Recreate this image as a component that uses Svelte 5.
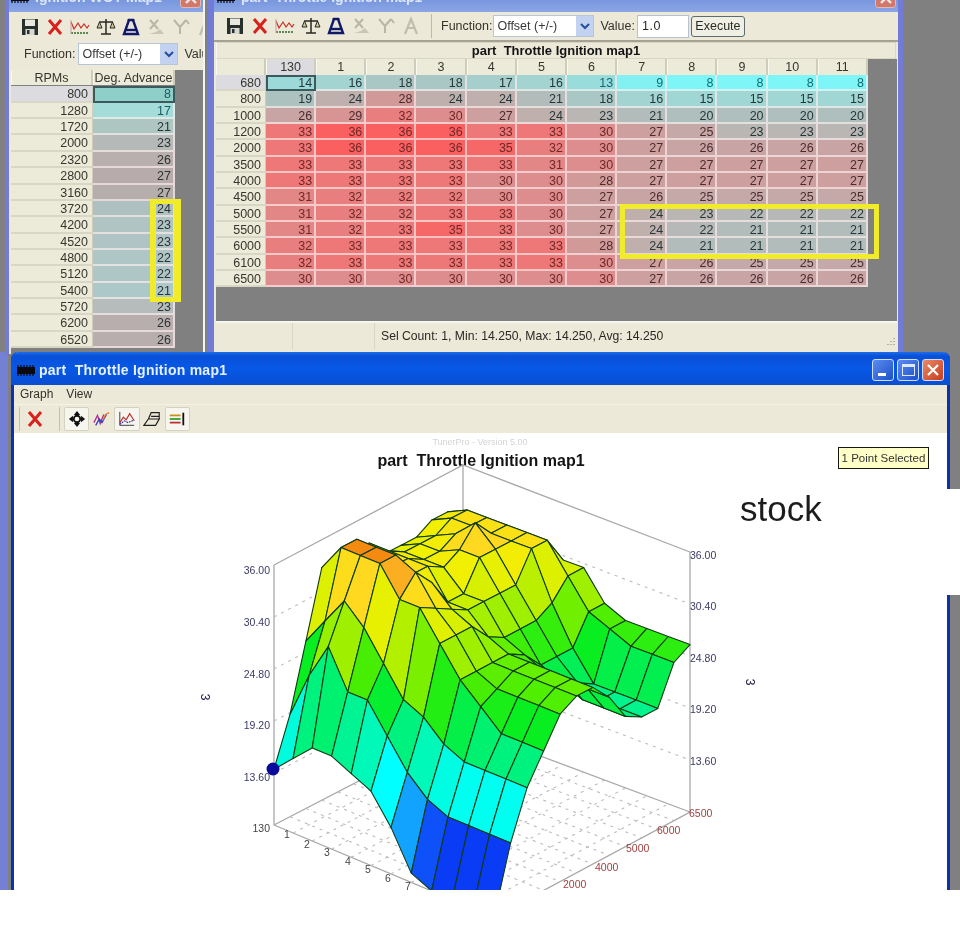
<script>
  const cols = ['130','1','2','3','4','5','6','7','8','9','10','11'];
  const rows = [
    [680,[14,16,18,18,17,16,13,9,8,8,8,8]],
    [800,[19,24,28,24,24,21,18,16,15,15,15,15]],
    [1000,[26,29,32,30,27,24,23,21,20,20,20,20]],
    [1200,[33,36,36,36,33,33,30,27,25,23,23,23]],
    [2000,[33,36,36,36,35,32,30,27,26,26,26,26]],
    [3500,[33,33,33,33,33,31,30,27,27,27,27,27]],
    [4000,[33,33,33,33,30,30,28,27,27,27,27,27]],
    [4500,[31,32,32,32,30,30,27,26,25,25,25,25]],
    [5000,[31,32,32,33,33,30,27,24,23,22,22,22]],
    [5500,[31,32,33,35,33,30,27,24,22,21,21,21]],
    [6000,[32,33,33,33,33,33,28,24,21,21,21,21]],
    [6100,[32,33,33,33,33,33,30,27,26,25,25,25]],
    [6500,[30,30,30,30,30,30,30,27,26,26,26,26]]
  ];
  const wot = [
    [800,8,'#8fcfca'],[1280,17,'#a4dcda'],[1720,21,'#aec6c2'],[2000,23,'#b5b9b7'],
    [2320,26,'#b9afae'],[2800,27,'#b7acab'],[3160,27,'#b5aead'],[3720,24,'#aec0bf'],
    [4200,23,'#b0c4c4'],[4520,23,'#b0c4c5'],[4800,22,'#aec6c6'],[5120,22,'#aec6c6'],
    [5400,21,'#acc8c8'],[5720,23,'#b6bcbc'],[6200,26,'#b9aeae'],[6520,26,'#b9aeae']
  ];

  function hex(c){ return [1,3,5].map(i=>parseInt(c.slice(i,i+2),16)); }
  function ramp(stops,v){
    if(v<=stops[0][0]) return stops[0][1];
    for(let i=1;i<stops.length;i++){
      if(v<=stops[i][0]){
        const t=(v-stops[i-1][0])/(stops[i][0]-stops[i-1][0]);
        const a=hex(stops[i-1][1]),b=hex(stops[i][1]);
        return `rgb(${a.map((x,k)=>Math.round(x+(b[k]-x)*t)).join(',')})`;
      }
    }
    return stops[stops.length-1][1];
  }
  const cellStops=[[8,'#7ef6f8'],[13,'#98dcdc'],[16,'#a4d4d2'],[19,'#abc2bf'],[21,'#b2bcba'],[23,'#b9b6b4'],[25,'#c4a9a8'],[27,'#cd9f9f'],[30,'#dd8d8d'],[33,'#ee7777'],[36,'#fa6060']];
  const surfStops=[[11.5,'#0a3cf5'],[13.5,'#1890ff'],[15.5,'#00d8ff'],[17,'#00ffff'],[19.5,'#00f8b8'],[22,'#00f070'],[24.5,'#08ee20'],[26.5,'#50ee00'],[28,'#90f000'],[30,'#c8f000'],[32,'#f0f000'],[33.5,'#ffd820'],[35.5,'#f8a020'],[36,'#f58a10']];
  const cellColor=v=>ramp(cellStops,v);
  const textColor=v=>v>=30?'#702828':v>=25?'#4a2c2c':v<=13?'#126a70':'#26383a';

  /* floor homography: u = column 0..1, v = row 0..1 */
  const L=[274,825],F=[494,917],R=[690,812],B=[463,727];
  const dx1=F[0]-R[0],dx2=B[0]-R[0],sx=L[0]-F[0]+R[0]-B[0];
  const dy1=F[1]-R[1],dy2=B[1]-R[1],sy=L[1]-F[1]+R[1]-B[1];
  const den=dx1*dy2-dx2*dy1;
  const g=(sx*dy2-dx2*sy)/den,h=(dx1*sy-sx*dy1)/den;
  const a=F[0]-L[0]+g*F[0],b=B[0]-L[0]+h*B[0],d=F[1]-L[1]+g*F[1],e=B[1]-L[1]+h*B[1];
  function floor(u,v){const w=g*u+h*v+1;return [(a*u+b*v+L[0])/w,(d*u+e*v+L[1])/w];}
  const ZS=9.3;
  function pt(c,r){const p=floor(c/11,r/12);return [p[0],p[1]-(rows[r][1][c]-8)*ZS];}
  const fmt=p=>p[0].toFixed(1)+','+p[1].toFixed(1);
  const quads=[];
  for(let r=11;r>=0;r--){
    for(let c=0;c<11;c++){
      const vals=[rows[r][1][c],rows[r][1][c+1],rows[r+1][1][c+1],rows[r+1][1][c]];
      const avg=vals.reduce((s,x)=>s+x,0)/4;
      quads.push({pts:[pt(c,r),pt(c+1,r),pt(c+1,r+1),pt(c,r+1)].map(fmt).join(' '),fill:ramp(surfStops,avg)});
    }
  }
  const floorLines=[];
  for(let c=1;c<11;c++){floorLines.push([floor(c/11,0),floor(c/11,1)]);}
  for(let r=1;r<12;r++){floorLines.push([floor(0,r/12),floor(1,r/12)]);}
  const zLeft=[[36,570],[30.4,622],[24.8,674],[19.2,725],[13.6,777]];
  const zRight=[[36,555],[30.4,606],[24.8,658],[19.2,709],[13.6,761]];
  const zFmt=['36.00','30.40','24.80','19.20','13.60'];
  const colTicks=[[287,838],[307,848],[327,856],[348,865],[368,873],[388,882],[408,890]];
  const rpmTicks=[['6500',689,817],['6000',657,834],['5000',626,852],['4000',595,871],['2000',563,888]];
  const tools=['save','x','chart','scale','weight','d1','d2','d3'];
</script>

<svg class="defs" aria-hidden="true">
  <defs>
    <symbol id="i-save" viewBox="0 0 20 20"><rect x="2" y="2" width="16" height="16" fill="#26302c"/><rect x="5" y="2.5" width="10" height="6.5" fill="#e8e8de"/><rect x="5.5" y="12" width="9" height="6" fill="#d8d8d0"/><rect x="7" y="13" width="2.5" height="4" fill="#26302c"/></symbol>
    <symbol id="i-x" viewBox="0 0 20 20"><path d="M4 3 16 17M16 3 4 17" stroke="#d8201c" stroke-width="3" fill="none"/></symbol>
    <symbol id="i-chart" viewBox="0 0 20 20"><path d="M1 16h18" stroke="#2a6a2a" stroke-width="1.3" stroke-dasharray="2 1" fill="none"/><path d="M1 5l3 7 4-6 3 5 3-4 3 4 2-3" stroke="#c83028" stroke-width="1.2" fill="none"/><path d="M1 3v14" stroke="#c8a0a0" stroke-width="1"/></symbol>
    <symbol id="i-scale" viewBox="0 0 20 20"><path d="M10 2v15M5 17h10M3 5h14" stroke="#2a2a20" stroke-width="1.5" fill="none"/><path d="M3.5 5 1 11h5zM16.5 5 14 11h5z" fill="#c8c49c" stroke="#2a2a20" stroke-width="1"/></symbol>
    <symbol id="i-weight" viewBox="0 0 20 20"><path d="M3 17h14L12 3H8z" fill="#e8e6d8" stroke="#101868" stroke-width="2.4"/><path d="M4 13h12" stroke="#101868" stroke-width="2.4"/><path d="M6.5 3h7" stroke="#101868" stroke-width="1.6"/></symbol>
    <symbol id="i-d1" viewBox="0 0 20 20"><path d="M4 3l8 9M12 3l-8 9" stroke="#b8b6a4" stroke-width="2" fill="none"/><path d="M3 17h15l-4-5-4 3z" fill="#c8c6b4"/></symbol>
    <symbol id="i-d2" viewBox="0 0 20 20"><path d="M3 3l6 7v7M15 3l-6 7M15 3l-3 4M15 3l3 4" stroke="#b8b6a4" stroke-width="2" fill="none"/></symbol>
    <symbol id="i-d3" viewBox="0 0 20 20"><path d="M4 18 10 3l6 15M6.5 12h7" stroke="#c0beac" stroke-width="2.2" fill="none"/></symbol>
    <symbol id="i-move" viewBox="0 0 20 20"><path d="M10 1l3.5 4.5h-7zM10 19l3.5-4.5h-7zM1 10l4.5-3.5v7zM19 10l-4.5-3.5v7z" fill="#101010"/><circle cx="10" cy="10" r="3.6" fill="none" stroke="#101010" stroke-width="2"/></symbol>
    <symbol id="i-zig" viewBox="0 0 20 20"><path d="M1 14 5 6l3 9 4-10" stroke="#b03090" stroke-width="1.5" fill="none"/><path d="M3 17l4-7 3 4 5-9" stroke="#3040c0" stroke-width="1.5" fill="none"/><path d="M11 11l3-6 4-2" stroke="#e08020" stroke-width="1.5" fill="none"/></symbol>
    <symbol id="i-graph" viewBox="0 0 20 20"><path d="M2 2v15h16" stroke="#303030" stroke-width="1" fill="none"/><path d="M2 14l4-6 3 3 4-7 5 8" stroke="#c03030" stroke-width="1.3" fill="none"/><path d="M2 16l5-4 4 2 7-3" stroke="#3030a0" stroke-width="1.2" stroke-dasharray="2 1" fill="none"/></symbol>
    <symbol id="i-plan" viewBox="0 0 20 20"><path d="M1 17 6 10h12l-4 7zM6 10 9 3h9v7M9 7h9" stroke="#202020" stroke-width="1.3" fill="none"/></symbol>
    <symbol id="i-legend" viewBox="0 0 20 20"><path d="M2 6h12" stroke="#c89020" stroke-width="2"/><path d="M2 10h12" stroke="#30a030" stroke-width="2"/><path d="M2 14h12" stroke="#c03030" stroke-width="2"/><path d="M17 3v14" stroke="#101010" stroke-width="2"/></symbol>
  </defs>
</svg>

{#snippet toolbarIcons()}
  {#each tools as t}
    <span class="tool"><svg width="20" height="20"><use href="#i-{t}"/></svg></span>
  {/each}
{/snippet}

{#snippet chip(cls)}
  <svg class={cls} width="18" height="11" viewBox="0 0 18 11"><rect y="2" width="18" height="7" fill="#0a0a10"/><path d="M1 0v11M4 0v11M7 0v11M10 0v11M13 0v11M16 0v11" stroke="#0a0a10" stroke-width="1.2" stroke-dasharray="2 7"/></svg>
{/snippet}

{#snippet closeInactive()}
  <span class="close-in"><svg width="14" height="14" viewBox="0 0 14 14"><path d="M2 2l10 10M12 2 2 12" stroke="#f2e6e2" stroke-width="2.4"/></svg></span>
{/snippet}

<div class="page">
  <div class="screen">
    <div class="behind"></div>
    <section class="win wot">
      <header class="inactive-title">{@render chip('chip')}<span class="cap">Ignition WOT Map1</span>{@render closeInactive()}</header>
      <div class="bar bar-a">{@render toolbarIcons()}</div>
      <div class="bar bar-b">
        <span class="lbl">Function:</span>
        <span class="select"><span>Offset (+/-)</span><i class="drop"><svg width="10" height="7" viewBox="0 0 10 7"><path d="M1 1l4 4 4-4" stroke="#23509c" stroke-width="2" fill="none"/></svg></i></span>
        <span class="lbl clip">Value:</span>
      </div>
      <div class="wot-area">
        <div class="wot-grid">
          <div class="hd">RPMs</div><div class="hd">Deg. Advance</div>
          {#each wot as [rpm,val,bg],i}
            <div class="rh" class:cur={i===0}>{rpm}</div>
            <div class="cell" class:sel={i===0} style:background={bg} style:color={val<20?'#1c5e60':'#2c3334'}>{val}</div>
          {/each}
        </div>
      </div>
    </section>

    <section class="win map">
      <header class="inactive-title">{@render chip('chip')}<span class="cap">part  Throttle Ignition map1</span>{@render closeInactive()}</header>
      <div class="bar bar-c">
        {@render toolbarIcons()}
        <span class="sep"></span>
        <span class="lbl">Function:</span>
        <span class="select wide"><span>Offset (+/-)</span><i class="drop"><svg width="10" height="7" viewBox="0 0 10 7"><path d="M1 1l4 4 4-4" stroke="#23509c" stroke-width="2" fill="none"/></svg></i></span>
        <span class="lbl val">Value:</span>
        <span class="input">1.0</span>
        <span class="btn">Execute</span>
      </div>
      <div class="map-title">part  Throttle Ignition map1</div>
      <div class="map-area">
        <div class="map-grid">
          <div class="hd corner"></div>
          {#each cols as c,i}<div class="hd" class:cur={i===0}>{c}</div>{/each}
          {#each rows as [rpm,vals],r}
            <div class="rh" class:cur={r===0}>{rpm}</div>
            {#each vals as v,c}
              <div class="cell" class:sel={r===0&&c===0} style:background={cellColor(v)} style:color={textColor(v)}>{v}</div>
            {/each}
          {/each}
        </div>
      </div>
      <footer class="status">
        <span class="s1"></span><span class="s2"></span>
        <span class="s3">Sel Count: 1, Min: 14.250, Max: 14.250, Avg: 14.250</span>
        <svg class="grip" width="12" height="12" viewBox="0 0 12 12"><path d="M10 2v1M7 5v1M10 5v1M4 8v1M7 8v1M10 8v1" stroke="#b4b2a0" stroke-width="2"/></svg>
      </footer>
    </section>

    <section class="win graph">
      <header class="active-title">
        {@render chip('chip big')}
        <span class="cap">part  Throttle Ignition map1</span>
        <span class="wbtns">
          <span class="wb"><i class="min"></i></span>
          <span class="wb"><i class="max"></i></span>
          <span class="wb red"><svg width="14" height="14" viewBox="0 0 14 14"><path d="M2 2l10 10M12 2 2 12" stroke="#fff" stroke-width="2.2"/></svg></span>
        </span>
      </header>
      <nav class="menu"><span>Graph</span><span>View</span></nav>
      <div class="gbar">
        <span class="gsep"></span>
        <span class="gt plain"><svg width="20" height="20"><use href="#i-x"/></svg></span>
        <span class="gsep"></span>
        <span class="gt on"><svg width="18" height="18"><use href="#i-move"/></svg></span>
        <span class="gt"><svg width="18" height="18"><use href="#i-zig"/></svg></span>
        <span class="gt on"><svg width="18" height="18"><use href="#i-graph"/></svg></span>
        <span class="gt"><svg width="18" height="18"><use href="#i-plan"/></svg></span>
        <span class="gt on"><svg width="18" height="18"><use href="#i-legend"/></svg></span>
      </div>
      <div class="plot">
        <svg class="chart" width="933" height="470" viewBox="14 433 933 470">
          <text x="480" y="445" class="wm" text-anchor="middle">TunerPro - Version 5.00</text>
          <text x="481" y="466" class="ttl" text-anchor="middle">part  Throttle Ignition map1</text>
          <g class="wall">
            <path d="M274 565V825M463 465V727M690 552V812M274 565 463 465 690 552M274 825 463 727 690 812 494 917 274 825"/>
          </g>
          <g class="dash">
            {#each [0.2,0.4,0.6,0.8] as t}
              <path d="M274 {825-260*t}L463 {727-262*t}L690 {812-260*t}"/>
            {/each}
            {#each floorLines as [p,q]}
              <path d="M{fmt(p)}L{fmt(q)}"/>
            {/each}
          </g>
          <g class="mesh">
            {#each quads as q}
              <polygon points={q.pts} fill={q.fill}/>
            {/each}
          </g>
          <circle cx="273" cy="769" r="6.5" fill="#0a0a9c"/>
          {#each zLeft as [z,y],i}<text x="270" y={y+4} class="zl" text-anchor="end">{zFmt[i]}</text>{/each}
          {#each zRight as [z,y],i}<text x="690" y={y+4} class="zl">{zFmt[i]}</text>{/each}
          <text x="270" y="832" class="tk" text-anchor="end">130</text>
          {#each colTicks as [x,y],i}<text {x} {y} class="tk" text-anchor="middle">{i+1}</text>{/each}
          {#each rpmTicks as [t,x,y]}<text {x} {y} class="rp">{t}</text>{/each}
          <text x="0" y="0" class="three" transform="translate(201 697) rotate(90)" text-anchor="middle">3</text>
          <text x="0" y="0" class="three" transform="translate(746 682) rotate(90)" text-anchor="middle">3</text>
        </svg>
        <div class="tip">1 Point Selected</div>
      </div>
    </section>

    <div class="mark mark-l"></div>
    <div class="mark mark-r"></div>
  </div>
  <div class="stock">stock</div>
</div>

<style>
  :global(body){margin:0;background:#fff;}
  .defs{position:absolute;width:0;height:0;}
  .page{position:relative;width:960px;height:940px;overflow:hidden;background:#fff;font-family:"Liberation Sans",Arial,sans-serif;font-size:12.5px;color:#2a2a24;filter:blur(.5px);}
  .screen{position:relative;width:960px;height:890px;overflow:hidden;background:#808080;}
  .behind{position:absolute;left:0;top:352px;width:8px;height:538px;background:#7380d4;}
  .win{position:absolute;box-sizing:border-box;}

  .wot{left:5px;top:-18px;width:200px;height:372px;background:#ece9d8;border-left:4px solid #727bd6;border-right:2px solid #f4f4f0;display:flex;flex-direction:column;}
  .map{left:207px;top:-18px;width:696px;height:372px;background:#ece9d8;border-left:7px solid #727bd6;border-right:5px solid #727bd6;display:flex;flex-direction:column;}

  .inactive-title{flex:none;height:30px;box-sizing:border-box;background:linear-gradient(#5f7fd8,#8aa6e4);color:#dfe6fa;font-weight:bold;font-size:14px;display:flex;align-items:center;gap:6px;padding:0 0 0 2px;white-space:pre;position:relative;}
  .map .inactive-title{padding-left:3px;}
  .chip{flex:none;}
  .cap{line-height:14px;}
  .close-in{position:absolute;bottom:4px;right:2px;width:21px;height:21px;display:flex;align-items:center;justify-content:center;background:#d0786c;border-radius:3px;border:1px solid #e8b8b0;box-sizing:border-box;}

  .bar{flex:none;display:flex;align-items:center;white-space:nowrap;overflow:hidden;}
  .bar-a{height:30px;padding-left:8.5px;}
  .tool{flex:none;width:25.2px;display:flex;justify-content:center;}
  .bar-b{height:24px;padding-left:15px;gap:3px;}
  .lbl{font-size:12.5px;color:#33332c;}
  .clip{margin-left:3px;}
  .select{flex:none;box-sizing:border-box;width:100px;height:22px;background:#fff;border:1px solid #b8c4d8;display:flex;align-items:center;justify-content:space-between;padding-left:3px;color:#38383a;}
  .select.wide{width:101px;margin-left:1px;}
  .drop{width:17px;height:20px;background:#c2d2f0;display:flex;align-items:center;justify-content:center;}

  .wot-area{flex:1;margin-top:4px;margin-left:2px;background:#808080;}
  .wot-grid{display:grid;grid-template-columns:82px 82px;grid-auto-rows:16.37px;width:164px;}
  .wot-grid .hd{height:15px;}

  .bar-c{height:30px;padding-left:8.5px;border-bottom:2px solid #a4a292;box-sizing:border-box;}
  .sep{flex:none;width:1px;height:24px;background:#bcb9a6;margin:0 9.5px 0 6.5px;}
  .val{margin-left:6px;}
  .input{flex:none;box-sizing:border-box;width:52px;height:23px;margin-left:2px;background:#fff;border:1px solid #b4c2d4;padding:3px 0 0 4px;letter-spacing:.6px;}
  .btn{flex:none;box-sizing:border-box;width:54px;height:21px;margin-left:2px;border:1px solid #5c6c70;border-radius:3px;text-align:center;line-height:19px;background:#f0efe4;}

  .map-title{flex:none;box-sizing:border-box;height:17px;margin:0 2px;border:1px solid #d8d6c4;border-left-color:#f8f8f0;text-align:center;font-weight:bold;font-size:13px;line-height:15px;white-space:pre;color:#141414;}
  .map-area{flex:1;margin:0 1px 0 2px;background:#808080;border-bottom:2px solid #f6f6f0;}
  .map-grid{display:grid;grid-template-columns:50px repeat(12,50.17px);grid-template-rows:16px;grid-auto-rows:16.35px;width:652px;}

  .hd{box-sizing:border-box;background:#ecead8;text-align:center;line-height:17px;border-right:2px solid #cfcdb9;border-left:1px solid #faf9f0;color:#36362e;overflow:hidden;white-space:nowrap;}
  .hd.cur{background:#dcdce0;}
  .rh{box-sizing:border-box;background:#ecead8;text-align:right;padding-right:4px;line-height:17px;border-bottom:2px solid #d8d6c4;border-right:1px solid #cfcdb9;color:#36362e;overflow:hidden;}
  .rh.cur{background:#dcdce0;}
  .cell{box-sizing:border-box;text-align:right;padding-right:2px;line-height:16px;border-bottom:2px solid rgba(255,240,240,.65);border-right:2px solid rgba(255,240,240,.65);overflow:hidden;}
  .cell.sel{outline:2px solid #3c5a5c;outline-offset:-2px;border-color:transparent;}

  .status{flex:none;height:31px;display:flex;align-items:flex-start;position:relative;background:#ece9d8;}
  .status span{height:26px;line-height:26px;box-sizing:border-box;}
  .s1{width:79px;border-right:1px solid #d8d6c4;}
  .s2{width:82px;border-right:1px solid #d8d6c4;}
  .s3{padding-left:6px;font-size:12.2px;}
  .grip{position:absolute;right:2px;bottom:6px;}

  .graph{left:11px;top:352px;width:939px;height:560px;background:#fff;border-radius:7px 7px 0 0;border:solid #0a32ac;border-width:0 3px;display:flex;flex-direction:column;}
  .active-title{flex:none;height:33px;margin:0 -3px;box-sizing:border-box;border-radius:7px 7px 0 0;background:linear-gradient(#1c6eea 0,#0a50d8 12%,#0658e6 50%,#0a4ed2 100%);color:#e6f0ff;font-weight:bold;font-size:14px;display:flex;align-items:center;padding:3px 6px 0 6px;white-space:pre;}
  .active-title .cap{margin-left:4px;letter-spacing:.25px;}
  .wbtns{margin-left:auto;display:flex;gap:3px;}
  .wb{box-sizing:border-box;width:22px;height:22px;border:1px solid #cfe0ff;border-radius:3px;background:linear-gradient(135deg,#5c8cf0,#1c50c8);display:flex;align-items:center;justify-content:center;position:relative;}
  .wb.red{background:linear-gradient(135deg,#e88a68,#c83c1c);}
  .min{width:8px;height:3px;background:#fff;position:absolute;left:5px;bottom:4px;}
  .max{box-sizing:border-box;width:13px;height:12px;border:1px solid #dde8ff;border-top-width:3px;}
  .menu{flex:none;height:19px;background:#ece9d8;display:flex;gap:13px;padding-left:6px;line-height:19px;font-size:12px;color:#33332c;}
  .gbar{flex:none;height:29px;background:#ece9d8;border-top:1px solid #f5f3e8;box-sizing:border-box;display:flex;align-items:center;padding-left:5px;}
  .gsep{width:1px;height:24px;background:#c4c2ae;margin-right:4px;flex:none;}
  .gt{flex:none;box-sizing:border-box;width:25.2px;height:24px;display:flex;align-items:center;justify-content:center;}
  .gt.plain{margin-right:13px;width:22px;}
  .gt.on{background:#f6f5ee;border:1px solid #d4d2c0;border-radius:2px;}
  .plot{position:relative;flex:1;overflow:hidden;}
  .chart{display:block;}
  .wall path{fill:none;stroke:#a8a8a8;stroke-width:1.3;}
  .dash path{fill:none;stroke:#bcbcbc;stroke-width:1.1;stroke-dasharray:3 5;}
  .mesh polygon{stroke:#0f3a14;stroke-width:1.1;stroke-linejoin:round;}
  text{font-family:"Liberation Sans",Arial,sans-serif;}
  .wm{font-size:9px;fill:#d4d4d4;}
  .ttl{font-size:16px;font-weight:bold;fill:#141414;white-space:pre;}
  .zl{font-size:10.5px;fill:#3a3a62;}
  .tk{font-size:10.5px;fill:#444;}
  .rp{font-size:10.5px;fill:#a04040;}
  .three{font-size:12px;fill:#20204a;}
  .tip{position:absolute;left:824px;top:14px;box-sizing:border-box;width:91px;height:22px;background:#ffffc8;border:1px solid #181810;line-height:20px;text-align:center;font-size:11.5px;white-space:nowrap;color:#333;}

  .mark{position:absolute;box-sizing:border-box;border:5px solid #f0ec2c;}
  .mark-l{left:150px;top:199px;width:31px;height:103px;border-width:5px 7px 5px 6px;}
  .mark-r{left:620px;top:204px;width:259px;height:55px;}
  .stock{position:absolute;left:730px;top:489px;width:230px;height:106px;box-sizing:border-box;background:#fff;padding-left:10px;font-size:35px;line-height:40px;color:#1c1c1c;}
</style>
